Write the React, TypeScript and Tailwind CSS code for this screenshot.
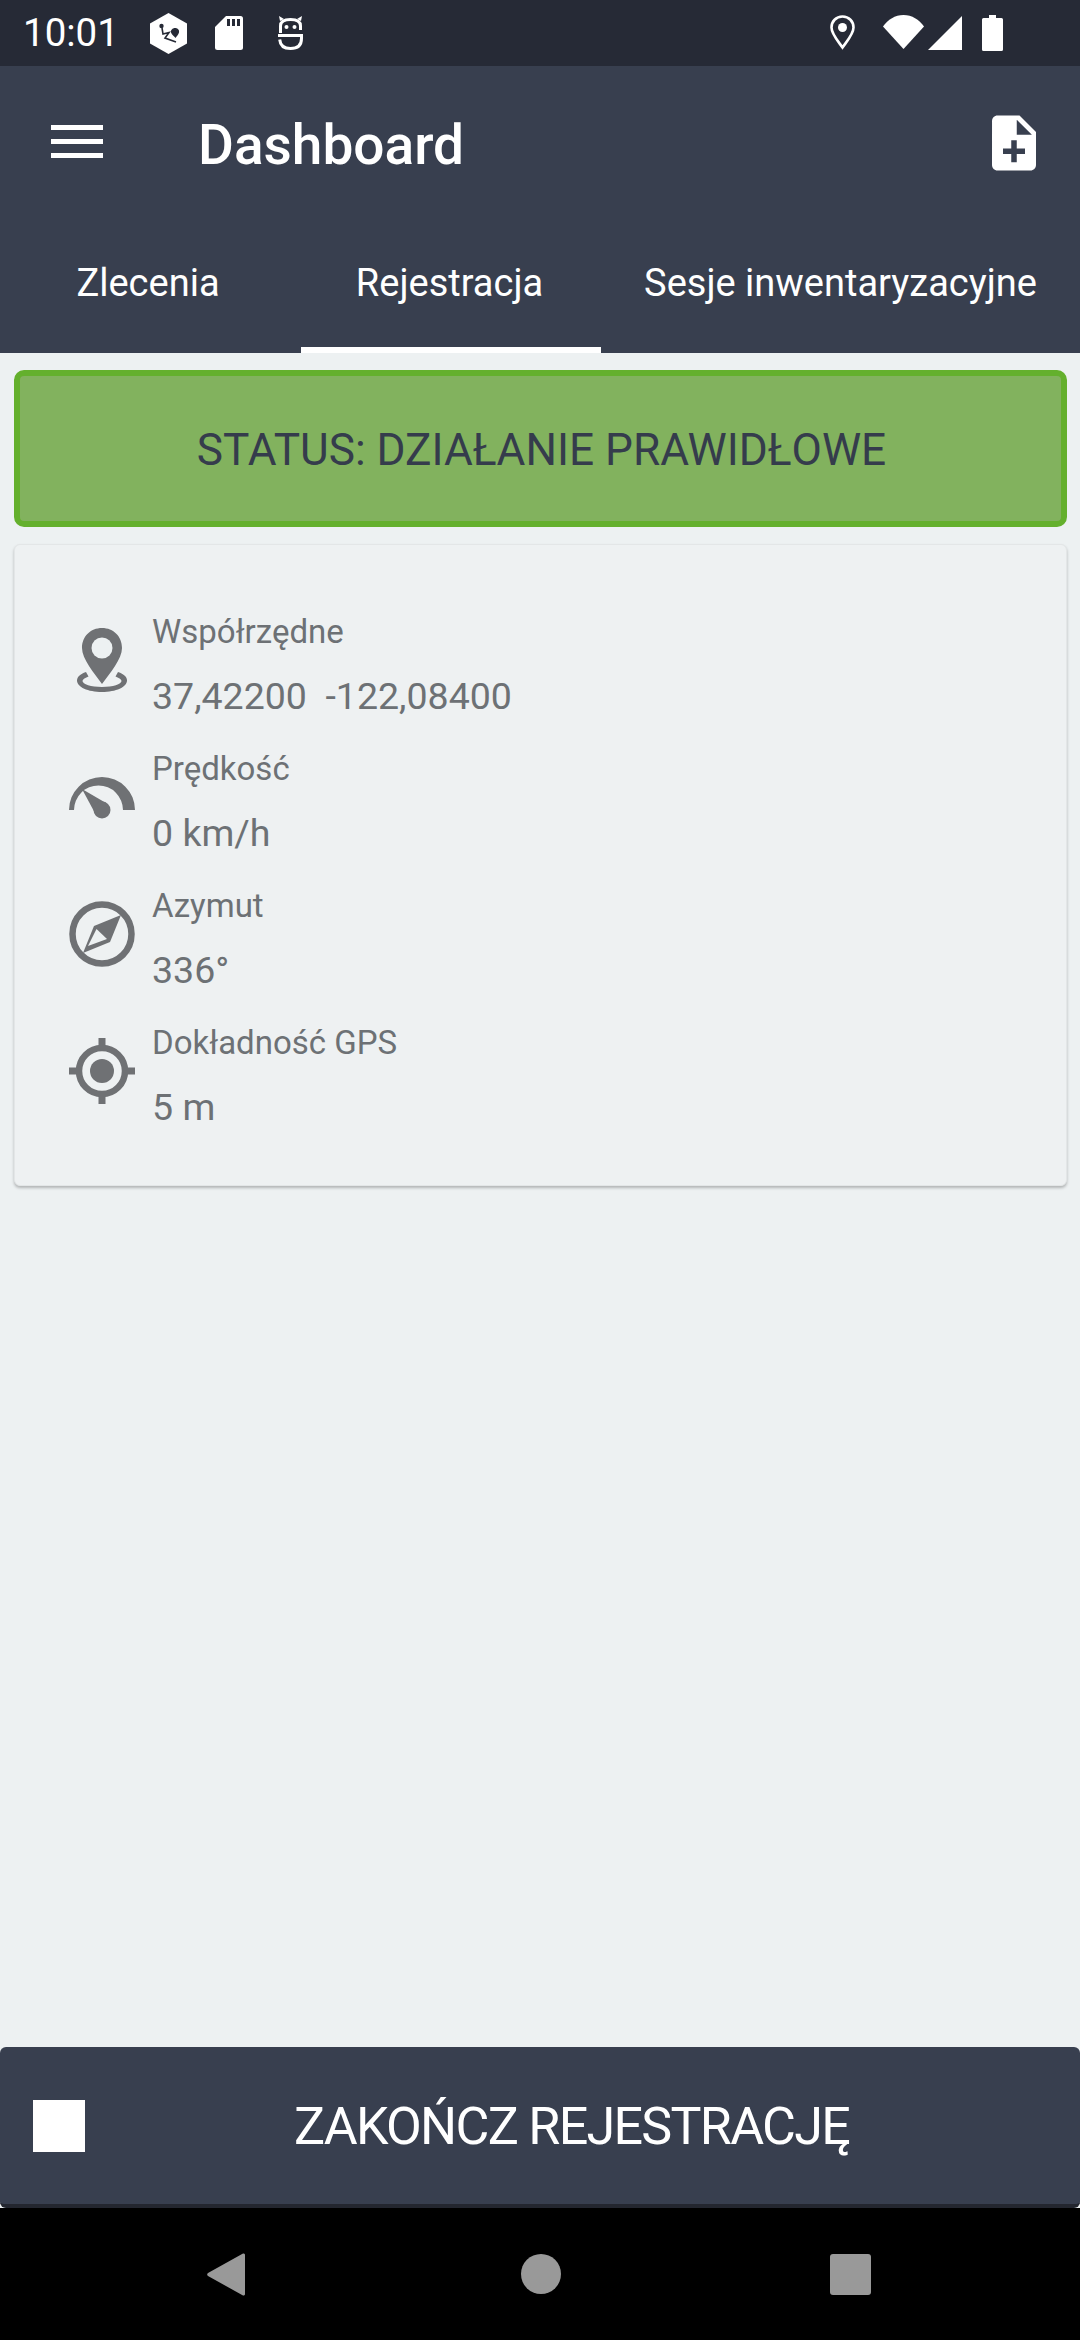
const ICON_GREY = "#6f7174"

const StatusIcons = () => (
  <>
    {/* hexagon notification */}
    <svg viewBox="0 0 37 41" className="absolute left-[150px] top-[13px] w-[37px] h-[41px]">
      <path d="M18.5 0 37 10.5V30.5L18.5 41 0 30.5V10.5Z" fill="#fff" />
      <circle cx="11.5" cy="13" r="2.2" fill="#262a36" />
      <path d="M12 15 13 21 19 19.5 15 25 26 29" fill="none" stroke="#262a36" strokeWidth="1.6" />
      <path d="M25 15c3 0 4.500 2.200 4 4.500-.5 2-2.500 4-3.500 5.500-1-1.500-4-3.500-4.500-5.500-.5-2.300 1.500-4.500 4-4.500Z" fill="#262a36" />
    </svg>
    {/* sd card */}
    <svg viewBox="0 0 28 34" className="absolute left-[215px] top-[16px] w-[28px] h-[34px]">
      <path d="M11 0H25.500A2.500 2.500 0 0 1 28 2.500V31.500A2.500 2.500 0 0 1 25.500 34H2.500A2.500 2.500 0 0 1 0 31.500V11Z" fill="#fff" />
      <path d="M12 3h3v7h-3zM17 3h3v7h-3zM22 3h3v7h-3z" fill="#262a36" />
    </svg>
    {/* robot */}
    <svg viewBox="0 0 25 34" className="absolute left-[278px] top-[16px] w-[25px] h-[34px]">
      <path d="M2.500 17V10Q2.500 3.500 12.500 3.500Q22.500 3.500 22.500 10V14" fill="none" stroke="#fff" strokeWidth="3" />
      <path d="M0 19.500H23.500V22.500Q23.500 32.500 12.500 32.500Q2.500 32.500 1.700 23.500" fill="none" stroke="#fff" strokeWidth="3" />
      <path d="M2 5 1 0 6 3ZM23 5 24 0 19 3Z" fill="#fff" />
      <circle cx="8.500" cy="11" r="2" fill="#fff" />
      <circle cx="16.500" cy="11" r="2" fill="#fff" />
    </svg>
    {/* location */}
    <svg viewBox="0 0 25 35" className="absolute left-[830px] top-[15px] w-[25px] h-[35px]">
      <path d="M12.500 1.500C6 1.500 1.500 6.500 1.500 12.500 1.500 19 8 26 12.500 32.500 17 26 23.500 19 23.500 12.500 23.500 6.500 19 1.500 12.500 1.500Z" fill="none" stroke="#fff" strokeWidth="2.600" />
      <circle cx="12.500" cy="12.500" r="4.500" fill="#fff" />
    </svg>
    {/* wifi */}
    <svg viewBox="0 0 41 34" className="absolute left-[883px] top-[15px] w-[41px] h-[34px]">
      <path d="M0 11.500C5 4.500 12 0 20.500 0S36 4.500 41 11.500L20.500 34Z" fill="#fff" />
    </svg>
    {/* signal */}
    <svg viewBox="0 0 34 34" className="absolute left-[928px] top-[16px] w-[34px] h-[34px]">
      <path d="M34 0V34H0Z" fill="#fff" />
    </svg>
    {/* battery */}
    <svg viewBox="0 0 21 36" className="absolute left-[982px] top-[15px] w-[21px] h-[36px]">
      <path d="M7 0H14V3H19.500A1.500 1.500 0 0 1 21 4.500V34.500A1.500 1.500 0 0 1 19.500 36H1.500A1.500 1.500 0 0 1 0 34.500V4.500A1.500 1.500 0 0 1 1.500 3H7Z" fill="#fff" />
    </svg>
  </>
)

const PinIcon = () => (
  <svg viewBox="0 0 66 66" className="w-[66px] h-[66px] -mt-[8px]">
    <path d="M33 1C21.500 1 13 9.500 13 21 13 32 25 46 33 57 41 46 53 32 53 21 53 9.500 44.500 1 33 1Z" fill={ICON_GREY} />
    <circle cx="33" cy="21" r="10.500" fill="#edf1f2" />
    <path d="M17 45C11 47 8 50 8 53.500 8 60 19 65 33 65S58 60 58 53.500C58 50 55 47 49 45L46.500 49.500C50.500 51 52.500 52.500 52.500 54 52.500 57 44 60 33 60S13.500 57 13.500 54C13.500 52.500 15.500 51 19.500 49.500Z" fill={ICON_GREY} />
  </svg>
)

const GaugeIcon = () => (
  <svg viewBox="0 4 66 66" className="w-[66px] h-[66px] -mt-[8px]">
    <path d="M0 50A33 33 0 0 1 66 50H54A24.500 24.500 0 0 0 5 50Z" fill={ICON_GREY} />
    <path d="M13 29 37 43 27 55Z" fill={ICON_GREY} />
    <circle cx="33" cy="50" r="8.500" fill={ICON_GREY} />
  </svg>
)

const CompassIcon = () => (
  <svg viewBox="0 0 66 66" className="w-[66px] h-[66px] -mt-[8px]">
    <circle cx="33" cy="33" r="29.500" fill="none" stroke={ICON_GREY} strokeWidth="6.500" />
    <path d="M52 14 41 41 14 52 25 25Z" fill={ICON_GREY} />
    <path d="M27.500 28 38 38 19 45Z" fill="#edf1f2" />
  </svg>
)

const AccuracyIcon = () => (
  <svg viewBox="0 0 66 66" className="w-[66px] h-[66px] -mt-[8px]">
    <circle cx="33" cy="33" r="23" fill="none" stroke={ICON_GREY} strokeWidth="6.500" />
    <circle cx="33" cy="33" r="12" fill={ICON_GREY} />
    <path d="M29.500 0h7v8h-7zM29.500 58h7v8h-7zM0 29.500h8v7H0zM58 29.500h8v7h-8z" fill={ICON_GREY} />
  </svg>
)

const rows = [
  { label: "Współrzędne", value: "37,42200\u00a0\u00a0-122,08400", icon: <PinIcon /> },
  { label: "Prędkość", value: "0 km/h", icon: <GaugeIcon /> },
  { label: "Azymut", value: "336°", icon: <CompassIcon /> },
  { label: "Dokładność GPS", value: "5 m", icon: <AccuracyIcon /> },
]

export default function App() {
  return (
    <div className="flex flex-col w-[1080px] h-[2340px] overflow-hidden bg-[#edf1f2] font-['Roboto',sans-serif]">
      {/* Status bar */}
      <div className="relative h-[66px] shrink-0 bg-[#262a36] text-white">
        <span className="absolute left-[23px] top-[11px] text-[38.5px] leading-[44px]">10:01</span>
        <StatusIcons />
      </div>

      {/* Toolbar */}
      <div className="flex items-center h-[154px] shrink-0 bg-[#383f4f] text-white">
        <div className="flex flex-col gap-[9px] w-[52px] ml-[51px] -mt-[4px]">
          <div className="h-[5px] bg-white" />
          <div className="h-[5px] bg-white" />
          <div className="h-[5px] bg-white" />
        </div>
        <h1 className="ml-[95px] mt-[4px] text-[55px] font-medium leading-none">Dashboard</h1>
        <svg viewBox="4 2 16 20" className="ml-auto mr-[44px] w-[44px] h-[56px]" fill="#fff">
          <path d="M14 2H6c-1.100 0-1.990.9-1.990 2L4 20c0 1.100.89 2 1.990 2H18c1.100 0 2-.9 2-2V8l-6-6zm2 14h-3v3h-2v-3H8v-2h3v-3h2v3h3v2zm-3-7V3.500L18.500 9H13z" />
        </svg>
      </div>

      {/* Tabs */}
      <div className="flex h-[133px] shrink-0 bg-[#383f4f] text-white text-[38px]">
        <div className="flex w-[301px] items-center justify-center pb-[6px] pr-[5px]">Zlecenia</div>
        <div className="flex w-[300px] items-center justify-center pr-[3px] border-b-[6px] border-white">Rejestracja</div>
        <div className="flex flex-1 items-center justify-center pb-[6px]">Sesje inwentaryzacyjne</div>
      </div>

      {/* Content */}
      <div className="flex flex-col flex-1 pl-[14px] pr-[13px] pt-[17px]">
        <div className="flex items-center justify-center h-[157px] pt-[3px] pl-[2px] rounded-[10px] border-[6px] border-[#64b02d] bg-[#82b25e] text-[#353c4c] text-[44.2px]">
          STATUS: DZIAŁANIE PRAWIDŁOWE
        </div>

        <div className="mt-[17px] pt-[50px] pb-[42px] rounded-[6px] bg-[#eef1f2] border border-[#e3e6e7] shadow-[0_2px_3px_rgba(0,0,0,0.25)]">
          {rows.map((row) => (
            <div key={row.label} className="flex items-center h-[137px] pl-[54px]">
              {row.icon}
              <div className="ml-[17px] flex flex-col text-[#6d7175]">
                <span className="text-[33px] leading-[46px]">{row.label}</span>
                <span className="mt-[18px] text-[37.5px] leading-[46px]">{row.value}</span>
              </div>
            </div>
          ))}
        </div>
      </div>

      {/* Bottom action */}
      <div className="flex items-center h-[161px] shrink-0 pl-[33px] pr-[22px] rounded-[6px] bg-[#383f4f] border-b-[4px] border-[#23262f]">
        <div className="w-[52px] h-[52px] bg-white" />
        <span className="flex-1 pt-[3px] text-center text-white text-[52px] tracking-[-1.7px]">ZAKOŃCZ REJESTRACJĘ</span>
      </div>

      {/* Navigation bar */}
      <div className="flex items-center justify-between h-[132px] shrink-0 bg-black pl-[207px] pr-[209px]">
        <svg viewBox="0 0 38 45" className="w-[38px] h-[45px] mr-[6px]">
          <path d="M36 1.500A1.500 1.500 0 0 1 38 3V42A1.500 1.500 0 0 1 36 43.500L1 24A2 2 0 0 1 1 21Z" fill="#999" />
        </svg>
        <div className="w-[40px] h-[40px] rounded-full bg-[#999]" />
        <div className="w-[41px] h-[41px] rounded-[3px] bg-[#999]" />
      </div>
    </div>
  )
}
